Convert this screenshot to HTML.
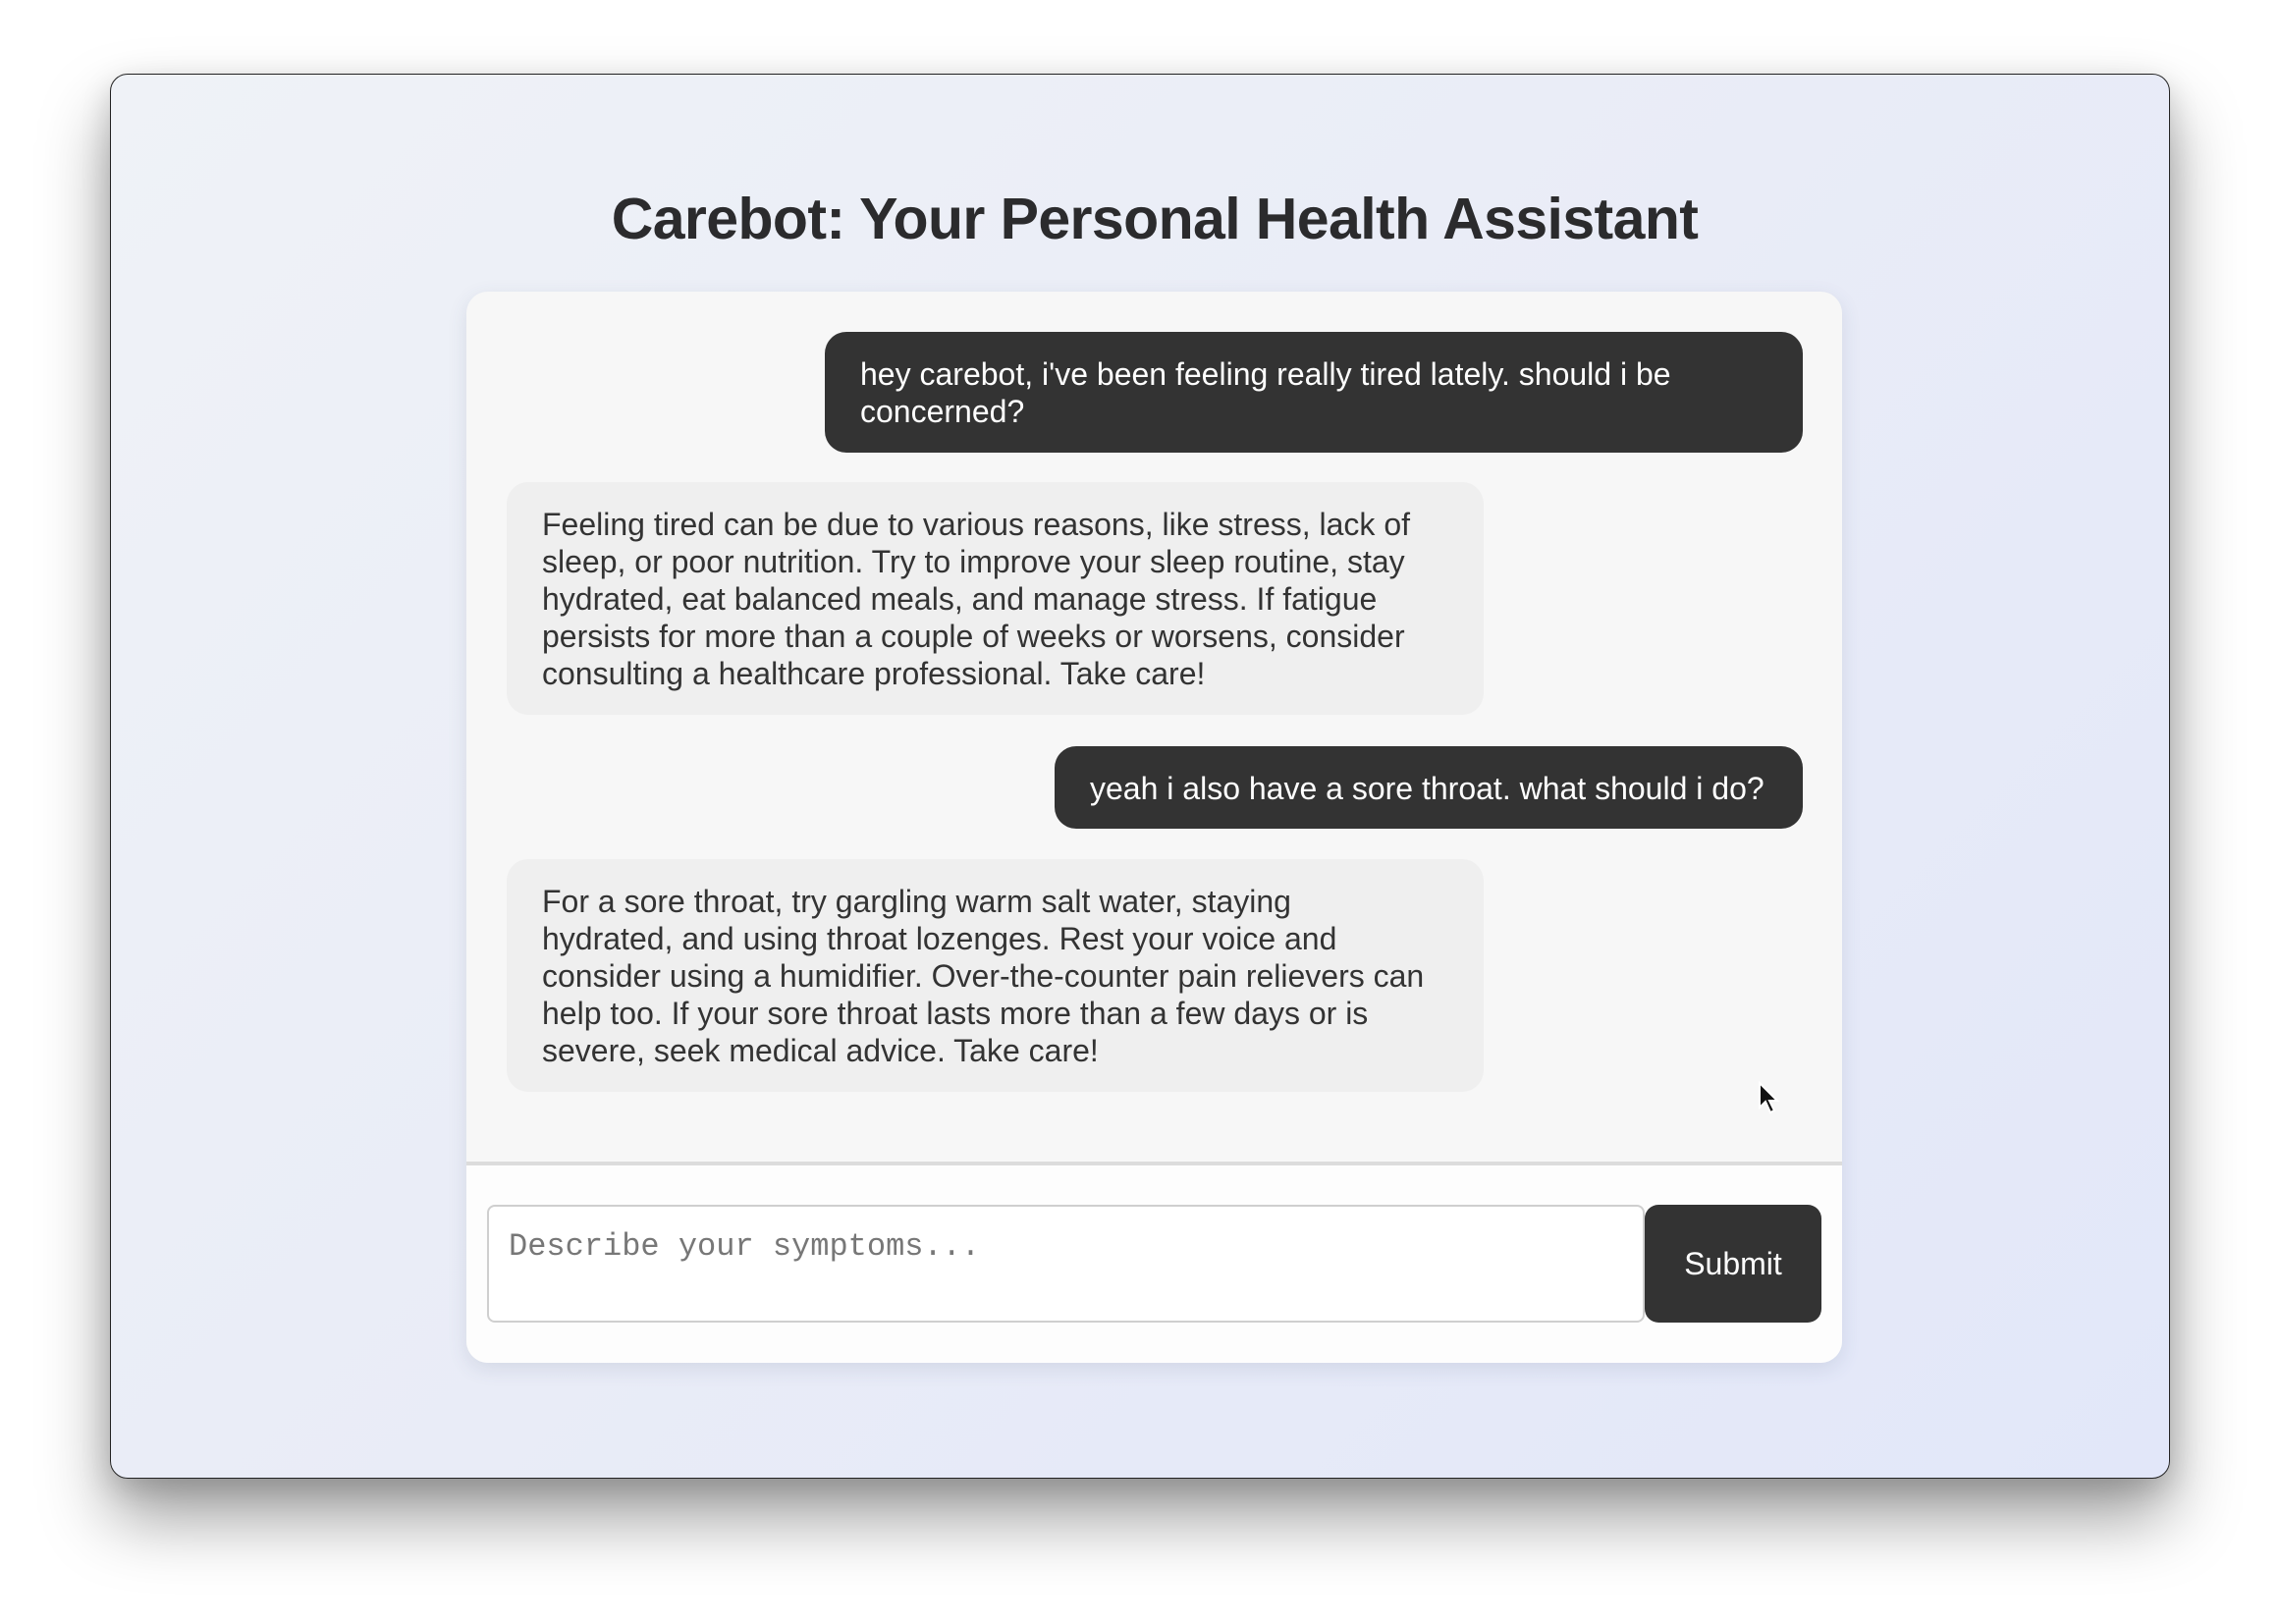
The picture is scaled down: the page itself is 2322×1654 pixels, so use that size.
<!DOCTYPE html>
<html><head><meta charset="utf-8"><style>
html,body{margin:0;padding:0;width:2322px;height:1654px;background:#fff;overflow:hidden;font-family:"Liberation Sans",sans-serif;}
.frame{position:absolute;left:112px;top:75px;width:2096px;height:1429px;border:1px solid #222;border-radius:18px;background:linear-gradient(135deg,#eff2f7 0%,#e9ecf7 50%,#e2e7f9 100%);box-shadow:0 40px 70px rgba(0,0,0,0.38),0 10px 30px rgba(0,0,0,0.15);overflow:hidden;}
.title{position:absolute;left:0;width:2352px;top:187px;text-align:center;font-weight:bold;font-size:59px;color:#2b2b2d;line-height:72px;letter-spacing:-0.6px;}
.card{position:absolute;left:475px;top:297px;width:1401px;height:1091px;border-radius:22px;background:#f7f7f7;box-shadow:0 6px 20px rgba(60,70,110,0.12);overflow:hidden;}
.bottom{position:absolute;left:0;top:886px;width:100%;height:205px;background:#fdfdfd;border-top:4px solid #dcdcdc;}
.msg{position:absolute;box-sizing:border-box;padding:24px 36px;font-size:32px;line-height:38px;border-radius:22px;white-space:nowrap;}
.u{background:#333;color:#fff;}
.b{background:#efefef;color:#333;}
.ta{position:absolute;left:21px;top:40px;width:1179px;height:120px;box-sizing:border-box;border:2px solid #cfcfcf;border-radius:8px;background:#fff;font-family:"Liberation Mono",monospace;font-size:32px;color:#777;padding:22px 20px;}
.btn{position:absolute;left:1200px;top:40px;width:180px;height:120px;background:#333;border-radius:14px;color:#fff;font-size:32px;text-align:center;line-height:120px;}
</style></head><body>
<div class="frame"></div>
<div class="title">Carebot: Your Personal Health Assistant</div>
<div class="card">
 <div class="msg u" style="left:365px;top:41px;width:996px;height:123px;">hey carebot, i've been feeling really tired lately. should i be<br>concerned?</div>
 <div class="msg b" style="left:41px;top:194px;width:995px;height:237px;">Feeling tired can be due to various reasons, like stress, lack of<br>sleep, or poor nutrition. Try to improve your sleep routine, stay<br>hydrated, eat balanced meals, and manage stress. If fatigue<br>persists for more than a couple of weeks or worsens, consider<br>consulting a healthcare professional. Take care!</div>
 <div class="msg u" style="left:599px;top:463px;width:762px;height:84px;">yeah i also have a sore throat. what should i do?</div>
 <div class="msg b" style="left:41px;top:578px;width:995px;height:237px;">For a sore throat, try gargling warm salt water, staying<br>hydrated, and using throat lozenges. Rest your voice and<br>consider using a humidifier. Over-the-counter pain relievers can<br>help too. If your sore throat lasts more than a few days or is<br>severe, seek medical advice. Take care!</div>
 <svg style="position:absolute;left:1315px;top:804px" width="24" height="36" viewBox="0 0 24 36"><path d="M2 2 L2 27 L8 21 L13 32 L17 30 L12 20 L20 20 Z" fill="#111" stroke="#fff" stroke-width="2"/></svg>
 <div class="bottom">
  <div class="ta">Describe your symptoms...</div>
  <div class="btn">Submit</div>
 </div>
</div>
</body></html>
